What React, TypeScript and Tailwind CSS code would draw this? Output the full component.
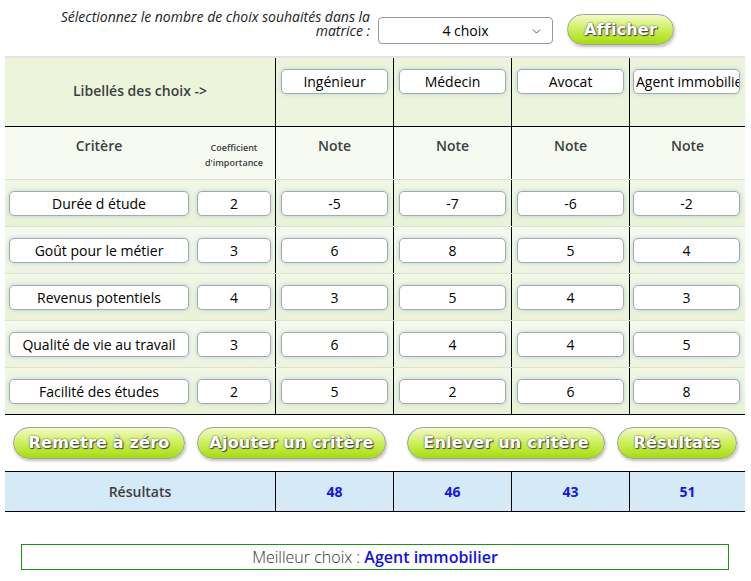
import { ChevronDown } from 'lucide-react';

const choix = ['Ingénieur', 'Médecin', 'Avocat', 'Agent immobilier'];

const criteres = [
  { label: 'Durée d étude', coef: 2, notes: [-5, -7, -6, -2] },
  { label: 'Goût pour le métier', coef: 3, notes: [6, 8, 5, 4] },
  { label: 'Revenus potentiels', coef: 4, notes: [3, 5, 4, 3] },
  { label: 'Qualité de vie au travail', coef: 3, notes: [6, 4, 4, 5] },
  { label: 'Facilité des études', coef: 2, notes: [5, 2, 6, 8] },
];

const resultats = [48, 46, 43, 51];

const grid = 'grid grid-cols-[188px_82px_118px_118px_118px_116px] w-[740px] ml-[5px]';
const sep = 'border-l border-black';

const Field = ({ value, className = '' }: { value: string | number; className?: string }) => (
  <div
    className={`h-[25px] rounded-[5px] border border-[#a9a9a9] bg-white text-center text-[14px] leading-[23px] text-black whitespace-nowrap overflow-hidden shadow-[0_0_4px_rgba(150,200,210,0.7)] ${className}`}
  >
    {value}
  </div>
);

const GreenButton = ({ label, className = '' }: { label: string; className?: string }) => (
  <button
    className={`rounded-full border border-[#a0a0a0] bg-[linear-gradient(to_bottom,#f3fbc6,#cdef5a_50%,#a6dc0c)] px-0 text-[16px] leading-[20px] font-bold tracking-[0.2px] text-white whitespace-nowrap shadow-[1px_2px_3px_rgba(0,0,0,0.25)] [text-shadow:0_0_2px_#444,1px_1px_1px_#444] [font-family:'DejaVu_Sans',sans-serif] ${className}`}
  >
    {label}
  </button>
);

export default function App() {
  return (
    <div className="w-[751px] h-[581px] bg-white text-[#3b3f42] [font-family:'Open_Sans',sans-serif]">
      <div className="flex items-start h-[45px]">
        <div className="ml-[40px] mt-[10px] w-[330px] text-right text-[14px] leading-[14px] italic text-[#222]">
          Sélectionnez le nombre de choix souhaités dans la matrice :
        </div>
        <div className="relative ml-[8px] mt-[17px] h-[27px] w-[175px] rounded-[4px] border border-[#999] bg-white text-[14px] leading-[25px] text-black">
          <div className="text-center">4 choix</div>
          <ChevronDown className="absolute right-[9px] top-[7px] h-[13px] w-[13px] text-[#333]" strokeWidth={1.5} />
        </div>
        <GreenButton label="Afficher" className="ml-[14px] mt-[14px] h-[31px] w-[107px]" />
      </div>

      <div className="mt-[11px]">
        {/* ligne des libellés */}
        <div className={`${grid} border-t-2 border-[#e3e3e3]`}>
          <div className="col-span-2 h-[68px] bg-[#edf4dc] flex items-center justify-center text-[14px] font-semibold pb-[4px]">
            Libellés des choix -&gt;
          </div>
          {choix.map((c, i) => (
            <div key={c} className={`${sep} h-[68px] bg-[#edf4dc] pt-[11px] ${i === 3 ? 'pl-[3px] pr-[5px]' : 'px-[5px]'}`}>
              <Field value={c} className={i === 3 ? 'text-left pl-[2px]' : ''} />
            </div>
          ))}
        </div>

        {/* en-tête */}
        <div className={`${grid} border-t border-black`}>
          <div className="h-[52px] bg-[#f7faf0] pt-[8px] text-center text-[14px] font-semibold">Critère</div>
          <div className="h-[52px] bg-[#f7faf0] pt-[13px] text-center text-[9px] leading-[15px] font-semibold">
            Coefficient
            <br />
            d'importance
          </div>
          {choix.map((c) => (
            <div key={c} className={`${sep} h-[52px] bg-[#f7faf0] pt-[8px] text-center text-[14px] font-semibold`}>
              Note
            </div>
          ))}
        </div>

        {/* critères */}
        {criteres.map((r, idx) => {
          const bg = idx % 2 === 0 ? 'bg-[linear-gradient(to_bottom,#f2f7e6,#e9f2d6)]' : 'bg-[linear-gradient(to_bottom,#f6f9ee,#eef4e0)]';
          return (
            <div key={r.label} className={`${grid} border-t border-[#dde2d4]`}>
              <div className={`${bg} h-[46px] flex items-center pl-[4px]`}>
                <Field value={r.label} className="w-[180px]" />
              </div>
              <div className={`${bg} h-[46px] flex items-center pl-[4px]`}>
                <Field value={r.coef} className="w-[74px]" />
              </div>
              {r.notes.map((n, i) => (
                <div key={i} className={`${sep} ${bg} h-[46px] flex items-center ${i === 3 ? 'pl-[3px] pr-[5px]' : 'px-[5px]'}`}>
                  <Field value={n} className="w-full" />
                </div>
              ))}
            </div>
          );
        })}
        <div className="ml-[5px] w-[740px] border-t border-black" />
      </div>

      {/* boutons */}
      <div className="flex mt-[12px]">
        <GreenButton label="Remetre à zéro" className="ml-[13px] h-[32px] w-[172px]" />
        <GreenButton label="Ajouter un critère" className="ml-[12px] h-[32px] w-[189px]" />
        <GreenButton label="Enlever un critère" className="ml-[21px] h-[32px] w-[198px]" />
        <GreenButton label="Résultats" className="ml-[12px] h-[32px] w-[120px]" />
      </div>

      {/* résultats */}
      <div className={`${grid} mt-[12px] border-y border-black bg-[#d4eaf7]`}>
        <div className="col-span-2 h-[39px] flex items-center justify-center text-[14px] font-semibold">Résultats</div>
        {resultats.map((v, i) => (
          <div key={i} className={`${sep} h-[39px] flex items-center justify-center text-[14px] font-bold text-[#1a12e8]`}>
            {v}
          </div>
        ))}
      </div>

      <div className="ml-[21px] mt-[32px] h-[26px] w-[708px] border-[1.5px] border-[#17960f] flex items-center justify-center text-[16px] leading-[22px]">
        <span className="font-light text-[#333]">Meilleur choix :&nbsp;</span>
        <span className="font-semibold text-[#1010ee]">Agent immobilier</span>
      </div>
    </div>
  );
}
